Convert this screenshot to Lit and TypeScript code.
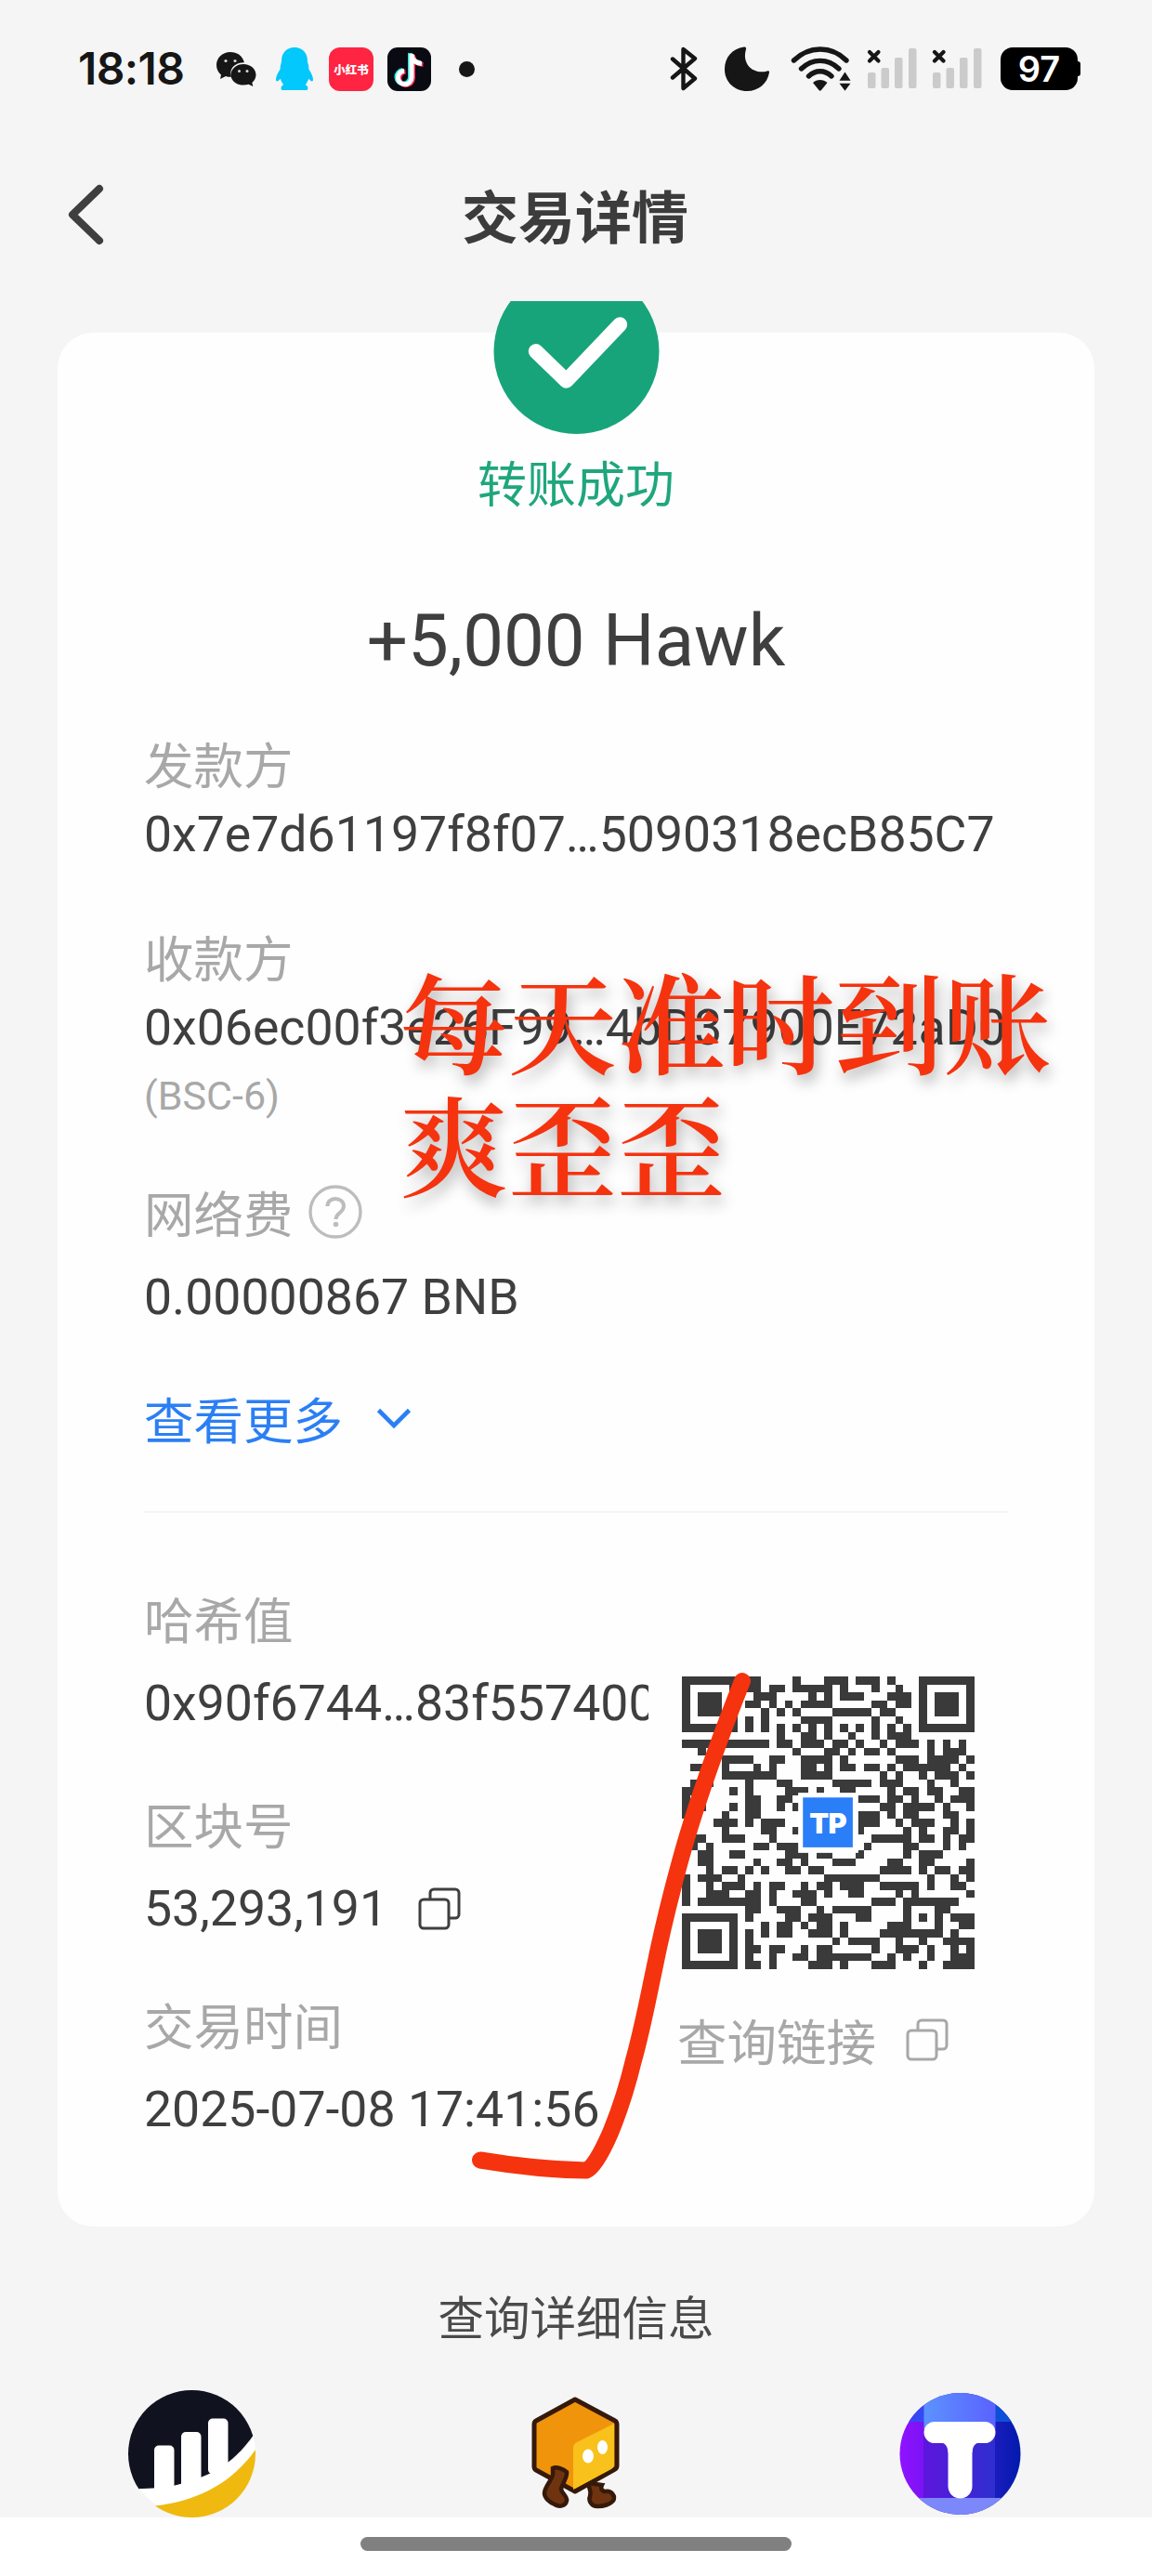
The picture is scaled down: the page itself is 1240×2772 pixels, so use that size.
import { LitElement, css, html, svg } from 'lit';
import { customElement, property } from 'lit/decorators.js';

// dark modules of the link QR code, one entry per row: "col" or "from-to"
const QR_ROWS = [
    '0-6 8-9 14 18-20 22-24 26 30-36',
    '0 6 8-9 11-12 14-18 20 24 27 30 36',
    '0 2-4 6 9-11 16 18 20-22 26-28 30 32-34 36',
    '0 2-4 6 8-9 11 13 15-18 24-25 27-28 30 32-34 36',
    '0 2-4 6 10 12 14 19-23 25-26 30 32-34 36',
    '0 6 8 10 15-18 24 27 30 36',
    '0-6 8 10 12 14 16 18 20 22 24 26 28 30-36',
    '12 15-16 18 21 24 26-28',
    '0-10 12-13 15-17 19-20 22 25 27-29 31 33 35',
    '2 14 18-19 21 23-24 26 31 33-35',
    '5-8 11-12 15-18 20 27-29 31-34 36',
    '1-3 5 9 11 15-16 18 20-21 23-24 26 28-33 35',
    '5-11 15-18 25 27 30 32-34 36',
    '1-3 8 12-13 19-23 25-27 31 34',
    '0-1 6 8 13-15 17 20-21 26 28-29 31-32 35-36',
    '0 8-9 12-13 22-24 26-27 29 32 34-36',
    '0-2 6 8-9 12 14 25-26 28-31 33 36',
    '0-1 5 8-9 22-24 26 28-29 33-34',
    '1 4-6 8 10-12 22-24 27 29-31 34 36',
    '0 5 10-11 14 22 28 30 33-34 36',
    '0-2 5-7 11 24-28 30-31 33 35-36',
    '0-1 3 9-10 12-14 23 28-29 33 35',
    '2-3 6-7 13-15 17-18 22 28 30-32',
    '2-3 9 12-13 15 19-21 26-27 30-31 36',
    '3 5-6 8 10 13-14 16-17 25-28 30 32-33 35-36',
    '0 2-4 7 18-24 31 34 36',
    '0 3 5-7 9 11-12 15 17-18 20-22 25-29 31 34-35',
    '0 3-5 8-9 11 14-16 18 21-22 27 29 36',
    '0 2-9 11 15-16 24-26 28-34',
    '8-9 12-14 17 19-23 28 32-33',
    '0-6 8 13-14 16-18 22-23 28 30 32 34-36',
    '0 6 10 12-13 15 17-18 20 26-28 32 35-36',
    '0 2-4 6 8 10 12-13 16-18 20 25-32 34',
    '0 2-4 6 8 19 21-24 27 30 33-36',
    '0 2-4 6 8-9 11-12 15 17-18 24 27-29 31 34 36',
    '0 6 8 11 14-15 17-23 26 28 31 34-36',
    '0-6 8-9 11 16-18 20 24-26 30 33-36',
];

function qrPath(rows: string[]) {
    return rows
        .map((row, y) =>
            row
                .split(' ')
                .map((run) => {
                    const [from, to] = run.split('-').map(Number);
                    const width = (to ?? from) - from + 1;
                    return `M${from} ${y}h${width}v1h-${width}z`;
                })
                .join('')
        )
        .join('');
}

const copyIcon = html`
    <svg width="46" height="46" viewBox="0 0 46 46" fill="none" stroke="currentColor" stroke-width="3">
        <rect x="2" y="13" width="31" height="31" rx="4" />
        <path d="M13 12V6a4 4 0 0 1 4-4h23a4 4 0 0 1 4 4v23a4 4 0 0 1-4 4h-6" />
    </svg>
`;

@customElement('status-bar')
export class StatusBar extends LitElement {
    @property() time = '';
    @property() battery = '';

    signal() {
        return html`
            <svg width="54" height="46" viewBox="0 0 54 46">
                <g fill="#cbcbcb">
                    <rect x="1" y="27" width="8.5" height="17" rx="2" />
                    <rect x="15.500" y="22" width="8.500" height="22" rx="2" />
                    <rect x="30" y="11" width="8.500" height="33" rx="2" />
                    <rect x="45" y="1" width="8.500" height="43" rx="2" />
                </g>
                <path d="M3 5l9.500 9.500M12.500 5L3 14.500" stroke="#161616" stroke-width="4.200" stroke-linecap="round" />
            </svg>
        `;
    }

    render() {
        return html`
            <div class="bar">
                <div class="time">${this.time}</div>
                <svg class="wechat" width="44" height="40" viewBox="0 0 44 40">
                    <path fill="#161616" d="M16 2C7 2 1 8.500 1 16c0 4.500 2 8 5 10.500L5 31l6-3c2 .7 4 1 6 .8C14 20 21 13 31 13.200 29 6 23 2 16 2z" />
                    <path fill="#161616" d="M30 15c7.500 0 13.500 5 13.500 11.500 0 3.600-1.700 6.500-4.200 8.500l1 4-4.600-2.300c-1.800.5-3.700.8-5.700.8-7.500 0-13.500-4.800-13.500-11S22.500 15 30 15z" />
                    <g fill="#d8d8d8">
                        <circle cx="11" cy="11.500" r="1.600" /><circle cx="21" cy="11.500" r="1.600" />
                        <circle cx="25.500" cy="22.500" r="1.500" /><circle cx="34" cy="22.500" r="1.500" />
                    </g>
                </svg>
                <svg class="qq" width="42" height="48" viewBox="0 0 42 48">
                    <path fill="#02c8fb" d="M21 1C12 1 7 7.500 7 15.500c0 2-.8 3.500-1.200 5.500-.3 1.500.2 3-.8 4.500C2.500 29 1 33 1 36c0 1.500 1.500 2 3 .5l1.800-1.800c.8 2.300 1.800 4.500 3.400 6.500-2.400.8-3.600 3.800-1.700 5.800h27c1.900-2 .7-5-1.700-5.800 1.600-2 2.600-4.200 3.400-6.500l1.800 1.800c1.500 1.500 3 1 3-.5 0-3-1.500-7-4-10.500-1-1.500-.5-3-.8-4.500-.4-2-1.200-3.500-1.200-5.500C35 7.500 30 1 21 1z" />
                </svg>
                <div class="red">小红书</div>
                <svg class="tiktok" width="47" height="47" viewBox="0 0 47 47">
                    <rect width="47" height="47" rx="11" fill="#090a12" />
                    <g fill="none" stroke-width="5">
                        <path stroke="#25e6e0" d="M24.500 6v26a7.300 7.300 0 1 1-8-7.500M24.500 7c1 6 5 9 11 9.500" />
                        <path stroke="#fe2c55" d="M27.500 8v25.500a7.300 7.300 0 1 1-8-7.500M27.500 9c1 6 5 9 11 9.500" />
                        <path stroke="#fff" d="M26 7v25.700a7.300 7.300 0 1 1-8-7.500M26 8c1 6 5 9 11 9.500" />
                    </g>
                </svg>
                <div class="dot"></div>
                <div class="right">
                    <svg class="bluetooth" width="30" height="50" viewBox="0 0 30 50">
                        <path fill="none" stroke="#161616" stroke-width="4.400" stroke-linecap="round" stroke-linejoin="round" d="M3 14.500l24 21L14.500 46V4L27 14 3 34.500" />
                    </svg>
                    <svg class="moon" width="50" height="50" viewBox="0 0 50 50">
                        <path fill="#161616" d="M22 1.500C9 3 1 13 1 25.500 1 39 11.500 49 25 49c12.500 0 22-8 24-20 .3-1.500-1-2-2.200-1.500C33 31.500 19 21 24 4c.5-1.500-.3-2.700-2-2.500z" />
                    </svg>
                    <svg class="wifi" width="66" height="50" viewBox="0 0 66 50">
                        <g fill="none" stroke="#161616" stroke-width="5.400" stroke-linecap="round">
                            <path d="M3.500 16C20 0 44 0 60 16" />
                            <path d="M11.500 25c12-11.500 28.500-11.500 40.500 0" />
                            <path d="M19.500 33c7.500-7 17-7 24.500 0" />
                        </g>
                        <path fill="#161616" d="M24 40c4-4 11.500-4 15.500 0l-6.500 8q-1.200 1.500-2.500 0z" />
                        <path fill="#161616" stroke="#f5f5f5" stroke-width="1.500" d="M58.500 27L66 38.500H51zM58.500 50L66 40H51z" />
                    </svg>
                    ${this.signal()}
                    ${this.signal()}
                    <div class="battery">
                        <div class="level">${this.battery}</div>
                        <div class="nub"></div>
                    </div>
                </div>
            </div>
        `;
    }

    static styles = css`
        :host {
            display: block;
        }
        .bar {
            display: flex;
            align-items: center;
            height: 148px;
            padding: 0 77px 0 84px;
            box-sizing: border-box;
        }
        .time {
            width: 148px;
            font: 600 48px/60px Inter, sans-serif;
            letter-spacing: -0.6px;
            color: #161616;
        }
        .wechat {
            margin-right: 20px;
        }
        .qq {
            margin-right: 16px;
        }
        .red {
            width: 48px;
            height: 47px;
            border-radius: 12px;
            background: #fe2442;
            color: #fff;
            font: 900 12.5px/48px 'Noto Sans CJK SC', sans-serif;
            text-align: center;
            margin-right: 15px;
        }
        .dot {
            width: 17px;
            height: 17px;
            border-radius: 50%;
            background: #161616;
            margin-left: 30px;
        }
        .right {
            display: flex;
            align-items: center;
            gap: 16px;
            margin-left: auto;
        }
        .bluetooth {
            margin-right: 12px;
        }
        .moon {
            margin-right: 6px;
        }
        .battery {
            display: flex;
            align-items: center;
            margin-left: 4px;
        }
        .level {
            width: 83px;
            height: 46px;
            border-radius: 13px;
            background: #000;
            color: #fff;
            font: 600 38px/46px Inter, sans-serif;
            text-align: center;
        }
        .nub {
            width: 3px;
            height: 16px;
            border-radius: 0 3px 3px 0;
            background: #000;
        }
    `;
}

@customElement('detail-field')
export class DetailField extends LitElement {
    @property() label = '';
    @property() value = '';
    @property({ type: Boolean, reflect: true }) loose = false;
    @property({ type: Boolean, reflect: true }) clipped = false;
    @property({ type: Boolean }) help = false;
    @property({ type: Boolean }) copy = false;

    render() {
        return html`
            <div class="label">
                ${this.label}
                ${this.help
                    ? html`<svg width="60" height="60" viewBox="0 0 60 60" fill="none" stroke="#bdbdbd" stroke-width="3.400">
                          <circle cx="30" cy="30" r="27" />
                          <path d="M21.500 24c0-11 17.500-10.500 17.500 0 0 7-8.500 7-8.500 14" stroke-width="4" />
                          <circle cx="30.500" cy="43.500" r="2.800" fill="#bdbdbd" stroke="none" />
                      </svg>`
                    : ''}
            </div>
            <div class="value">${this.value} ${this.copy ? copyIcon : ''}</div>
        `;
    }

    static styles = css`
        :host {
            display: block;
        }
        .label {
            display: flex;
            align-items: center;
            gap: 15px;
            height: 60px;
            font: 400 53.500px/60px 'Noto Sans CJK SC', sans-serif;
            color: #a8a8a8;
        }
        .value {
            display: flex;
            align-items: center;
            gap: 33px;
            height: 64px;
            margin: 15px 0 -3px;
            font: 400 53.600px/64px Roboto, sans-serif;
            color: #3f3f3f;
            white-space: nowrap;
        }
        :host([loose]) .value {
            margin-top: 30px;
        }
        :host([clipped]) .value {
            overflow: hidden;
        }
    `;
}

@customElement('app-root')
export class AppRoot extends LitElement {
    qr() {
        return html`
            <svg class="qr" width="315" height="315" viewBox="0 0 37 37">
                <path fill="#3a3a3a" shape-rendering="crispEdges" d=${qrPath(QR_ROWS)} />
                <rect x="14.700" y="14.700" width="7.600" height="7.600" fill="#fff" />
                <rect x="15.300" y="15.300" width="6.300" height="6.300" fill="#2a7ef7" />
                ${svg`<text class="qr-logo" x="18.450" y="19.850" text-anchor="middle">TP</text>`}
            </svg>
        `;
    }

    render() {
        return html`
            <div class="screen">
                <status-bar time="18:18" battery="97"></status-bar>
                <div class="nav">
                    <svg class="back" width="44" height="68" viewBox="0 0 44 68">
                        <path d="M37 6L8 34l29 28" fill="none" stroke="#3f3f3f" stroke-width="8" stroke-linecap="round" stroke-linejoin="round" />
                    </svg>
                    <div class="title">交易详情</div>
                </div>

                <div class="content">
                    <div class="card">
                        <svg class="badge" width="179" height="180" viewBox="0 0 180 180">
                            <circle cx="90" cy="90" r="89.500" fill="#18a47a" />
                            <path d="M46 90l33 32 58-61" fill="none" stroke="#fff" stroke-width="16" stroke-linecap="round" stroke-linejoin="round" />
                        </svg>
                        <div class="result">转账成功</div>
                        <div class="amount">+5,000 Hawk</div>

                        <detail-field class="from" label="发款方" value="0x7e7d61197f8f07…5090318ecB85C7"></detail-field>
                        <detail-field class="to" label="收款方" value="0x06ec00f3e26F99…4bD37900E72aD0"></detail-field>
                        <div class="note">(BSC-6)</div>
                        <detail-field class="fee" loose help label="网络费" value="0.00000867 BNB"></detail-field>
                        <div class="more">
                            查看更多
                            <svg width="38" height="24" viewBox="0 0 38 24">
                                <path d="M2.500 3.500L19 20 35.500 3.500" fill="none" stroke="#2b7ff5" stroke-width="4.600" />
                            </svg>
                        </div>
                        <div class="divider"></div>

                        <div class="chain">
                            <div class="chain-fields">
                                <detail-field loose clipped label="哈希值" value="0x90f6744…83f557400"></detail-field>
                                <detail-field class="block" loose copy label="区块号" value="53,293,191"></detail-field>
                                <detail-field class="date" loose label="交易时间" value="2025-07-08 17:41:56"></detail-field>
                            </div>
                            <div class="link">
                                ${this.qr()}
                                <div class="link-label">查询链接 ${copyIcon}</div>
                            </div>
                        </div>
                    </div>

                    <div class="explorers-title">查询详细信息</div>
                    <div class="explorers">
                        <svg width="137" height="137" viewBox="0 0 137 137">
                            <defs><clipPath id="disc"><circle cx="68.500" cy="68.500" r="68.500" /></clipPath></defs>
                            <g clip-path="url(#disc)">
                                <path fill="#10131f" d="M0 0h137v45C122 68 108 78 92 88L60 102 30 107H0z" />
                                <path fill="#fff" d="M137 48c-14 20-30 35-59 46-18 7-36 12-68 12l20 18c50-4 86-24 107-59z" />
                                <path fill="#efb90f" d="M29 124.500C78 119 114 97 137 64v73H29z" />
                            </g>
                            <g fill="#fff">
                                <rect x="28" y="59.500" width="21.500" height="60" rx="5" />
                                <rect x="57" y="45" width="21.500" height="62" rx="5" />
                                <rect x="86" y="30.500" width="21.500" height="60" rx="5" />
                            </g>
                        </svg>
                        <svg width="99" height="137" viewBox="0 0 99 137">
                            <path d="M61 100c1 6 4 9 2 14s2 12 9 11c5 0 13-2 16-6 3-5-2-11-8-10-4 0-6-3-4-7z" fill="#6f3310" stroke="#35190a" stroke-width="4.500" />
                            <path d="M47 10L5 33q-2 1-2 4v45q0 3 2 4l42 23 43-24q2-1 2-4V37q0-3-2-4z" fill="#f0940c" stroke="#35190a" stroke-width="5" stroke-linejoin="round" />
                            <path d="M45 62q0-4 4-6l40-20v44q0 3-3 5l-41 22z" fill="#f8c11c" />
                            <g fill="#fff"><ellipse cx="61" cy="71" rx="6" ry="7.500" /><ellipse cx="76.500" cy="61.500" rx="5.500" ry="7.500" /></g>
                            <path d="M23 84c4-2 12 1 15 4 1 5-4 12-6 18 0 5 7 8 6 13-1 6-8 7-13 4-5-2-11-7-11-12 0-7 8-14 9-20z" fill="#6f3310" stroke="#35190a" stroke-width="4.500" />
                        </svg>
                        <svg width="131" height="137" viewBox="0 0 131 137">
                            <defs>
                                <clipPath id="ball"><ellipse cx="65.500" cy="68.500" rx="65" ry="65.500" /></clipPath>
                                <linearGradient id="body"><stop offset="0" stop-color="#9013ff" /><stop offset=".2" stop-color="#7b12f5" /><stop offset=".2" stop-color="#5c16dd" /><stop offset=".79" stop-color="#2e2fcf" /><stop offset=".79" stop-color="#1b1bbd" /><stop offset="1" stop-color="#001bab" /></linearGradient>
                                <linearGradient id="cap"><stop offset="0" stop-color="#5c92ff" /><stop offset="1" stop-color="#5b62ff" /></linearGradient>
                            </defs>
                            <g clip-path="url(#ball)">
                                <rect width="131" height="137" fill="url(#body)" />
                                <rect width="27" height="34" fill="#3548f5" />
                                <rect x="103" width="28" height="34" fill="#0d50d8" />
                                <rect x="26.500" width="77" height="42" fill="url(#cap)" />
                                <rect y="116" width="131" height="21" fill="#7c87fa" />
                            </g>
                            <rect x="26.500" y="34" width="77" height="23" rx="11.500" fill="#fff" />
                            <rect x="52.500" y="40" width="26" height="76.500" rx="13" fill="#fff" />
                            <path d="M42 56q10 0 10.500 11h26q.5-11 10.500-11z" fill="#fff" />
                        </svg>
                    </div>
                </div>

                <div class="gesture"><div class="gesture-bar"></div></div>

                <!-- hand-made marks on top of the page -->
                <div class="caption">每天准时到账<br />爽歪歪</div>
                <svg class="stroke" width="320" height="560" viewBox="500 1790 320 560">
                    <path d="M799 1809C774 1872 750 1937 732 2003C721 2043 712 2080 704 2120C697 2153 691 2185 682 2217C675 2246 667 2271 657 2295Q641 2332 631 2335.500C590 2335 556 2331 517 2324.500" fill="none" stroke="#f5330f" stroke-width="18" stroke-linecap="round" stroke-linejoin="round" />
                </svg>
            </div>
        `;
    }

    static styles = css`
        :host {
            display: block;
        }
        .screen {
            position: relative;
            display: flex;
            flex-direction: column;
            width: 1240px;
            height: 2772px;
            background: #f5f5f5;
            overflow: hidden;
            font-family: Roboto, 'Noto Sans CJK SC', sans-serif;
        }
        svg {
            display: block;
            flex: none;
        }
        .nav {
            display: flex;
            align-items: center;
            height: 176px;
            padding: 0 70px 10px;
            box-sizing: border-box;
        }
        .title {
            flex: 1;
            margin-right: 46px;
            text-align: center;
            font: 700 61px/80px 'Noto Sans CJK SC', sans-serif;
            color: #3c3c3c;
        }
        .content {
            height: 2385px;
            padding-top: 34px;
            box-sizing: border-box;
            overflow: hidden;
        }
        .card {
            display: flex;
            flex-direction: column;
            height: 2038px;
            margin: 0 62px;
            padding: 0 93px;
            box-sizing: border-box;
            border-radius: 38px;
            background: #fefefe;
        }
        .badge {
            align-self: center;
            margin-top: -70px;
        }
        .result {
            margin-top: 20px;
            text-align: center;
            font: 400 53px/60px 'Noto Sans CJK SC', sans-serif;
            color: #1fa67c;
        }
        .amount {
            margin-top: 97px;
            text-align: center;
            font: 400 78px/90px Roboto, sans-serif;
            color: #3f3f3f;
        }
        .from {
            margin-top: 56px;
        }
        .to {
            margin-top: 72px;
        }
        .note {
            margin-top: 19px;
            font-size: 43px;
            line-height: 50px;
            color: #a8a8a8;
        }
        .fee {
            margin-top: 70px;
        }
        .more {
            display: flex;
            align-items: center;
            gap: 36px;
            margin-top: 71px;
            font: 400 53.500px/60px 'Noto Sans CJK SC', sans-serif;
            color: #2b7ff5;
        }
        .divider {
            height: 2px;
            margin-top: 70px;
            background: #f4f4f4;
        }
        .chain {
            display: flex;
            gap: 36px;
            margin-top: 83px;
        }
        .chain-fields {
            width: 543px;
        }
        .block {
            margin-top: 70px;
        }
        .date {
            margin-top: 65px;
        }
        .link {
            padding-top: 93px;
        }
        .qr-logo {
            font: 900 3.600px Inter, sans-serif;
            letter-spacing: -0.1px;
            fill: #fff;
        }
        .link-label {
            display: flex;
            align-items: center;
            gap: 32px;
            margin: 46px 0 0 -5px;
            font: 400 53.500px/60px 'Noto Sans CJK SC', sans-serif;
            color: #a8a8a8;
            white-space: nowrap;
        }
        .explorers-title {
            margin-top: 66px;
            text-align: center;
            font: 400 49.500px/60px 'Noto Sans CJK SC', sans-serif;
            color: #4a4a4a;
        }
        .explorers {
            display: flex;
            justify-content: space-between;
            margin-top: 50px;
            padding: 0 141px 0 138px;
        }
        .gesture {
            display: flex;
            justify-content: center;
            height: 63px;
            padding-top: 21px;
            box-sizing: border-box;
            background: #fff;
        }
        .gesture-bar {
            width: 464px;
            height: 15px;
            border-radius: 8px;
            background: #808080;
        }
        .caption {
            position: absolute;
            left: 430px;
            top: 1030px;
            font: 600 117px/132px 'Noto Serif CJK SC', 'Noto Serif SC', 'Noto Sans CJK SC', serif;
            color: #f5330f;
            text-shadow: 3px 8px 16px rgba(0, 0, 0, 0.3);
            white-space: nowrap;
        }
        .stroke {
            position: absolute;
            left: 500px;
            top: 1790px;
        }
    `;
}
